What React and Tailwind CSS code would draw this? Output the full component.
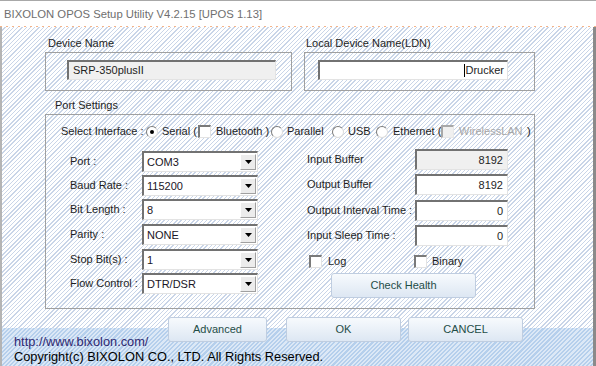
import React from "react";

const hatch =
  "bg-[repeating-linear-gradient(135deg,#ffffff_0px,#ffffff_2px,#c9d5e8_2px,#c9d5e8_3px)]";
const band =
  "bg-[repeating-linear-gradient(135deg,#dce8f6_0px,#dce8f6_1.5px,#b5cfec_1.5px,#b5cfec_3px)]";
const sunken =
  "border-t-2 border-l-2 border-r border-b border-t-[#727272] border-l-[#727272] border-r-[#e3e3e3] border-b-[#e3e3e3]";
const btn =
  "rounded-[3px] border border-[#bfcde0] bg-[linear-gradient(#f7fafd,#dde7f3)] text-[#1f4d47] flex items-center justify-center";

function Combo({ value, cls = "" }) {
  return (
    <div className={`w-[116px] h-[21px] bg-white flex items-center ${sunken} ${cls}`}>
      <span className="flex-1 pl-[3px] text-[#1a1525]">{value}</span>
      <div className="w-[16px] h-[16px] mr-[1px] bg-[#ececec] border border-t-white border-l-white border-r-[#a0a0a0] border-b-[#a0a0a0] flex items-center justify-center">
        <svg width="7" height="4" viewBox="0 0 7 4">
          <path d="M0 0h7L3.5 4z" fill="#000" />
        </svg>
      </div>
    </div>
  );
}

function Radio({ checked }) {
  return (
    <div className="w-[12px] h-[12px] rounded-full bg-white border border-t-[#7a7a7a] border-l-[#7a7a7a] border-r-[#dcdcdc] border-b-[#dcdcdc] flex items-center justify-center shrink-0">
      {checked && <div className="w-[4px] h-[4px] rounded-full bg-black" />}
    </div>
  );
}

function Check({ disabled }) {
  return (
    <div
      className={
        disabled
          ? "w-[13px] h-[13px] shrink-0 bg-[#f0f0f0] border-t-2 border-l-2 border-r border-b border-t-[#a8a8a8] border-l-[#a8a8a8] border-r-[#e8e8e8] border-b-[#e8e8e8]"
          : "w-[13px] h-[13px] shrink-0 bg-white border-t-2 border-l-2 border-r border-b border-t-[#7a7a7a] border-l-[#7a7a7a] border-r-[#e3e3e3] border-b-[#e3e3e3]"
      }
    />
  );
}

function NumInput({ value, gray, cls = "" }) {
  return (
    <div
      className={`w-[93px] h-[21px] flex items-center justify-end pr-[4px] ${sunken} ${
        gray ? "bg-[#f0f0f0]" : "bg-white"
      } ${cls}`}
    >
      {value}
    </div>
  );
}

export default function App() {
  const leftRows = [
    ["Port :", "COM3", ""],
    ["Baud Rate :", "115200", "mt-[3px]"],
    ["Bit Length :", "8", "mt-[3px]"],
    ["Parity :", "NONE", "mt-[4px]"],
    ["Stop Bit(s) :", "1", "mt-[4px]"],
    ["Flow Control :", "DTR/DSR", "mt-[3px]"],
  ];
  return (
    <div className="w-[596px] h-[366px] bg-white flex flex-col overflow-hidden font-['Liberation_Sans',Arial,sans-serif] text-[11px] leading-[13px] text-[#1e1e1e]">
      <div className="h-[26px] shrink-0 flex items-center pl-[4px] border-t border-[#a8a8a8] text-[#6f6f6f]">
        <span className="text-[11.3px] leading-[14px]">
          BIXOLON OPOS Setup Utility V4.2.15 [UPOS 1.13]
        </span>
      </div>
      <div className="h-px shrink-0 bg-[repeating-linear-gradient(90deg,#f5b48a_0px,#f5b48a_2px,transparent_2px,transparent_6px)]" />
      <div className={`flex-1 flex flex-col border-l-2 border-l-[#b4b4b4] border-r-[3px] border-r-[#8a8a8a] ${hatch}`}>
        {/* top groups */}
        <div className="pt-[10px] pl-[43px] flex gap-[12px]">
          <div className="w-[247px]">
            <div className="pl-[3px] h-[13px]">Device Name</div>
            <div className="mt-[2px] h-[39px] border border-[#a0a0a0] pl-[21px] pt-[7px]">
              <div className={`w-[209px] h-[20px] bg-[#f0f0f0] flex items-center pl-[4px] ${sunken}`}>
                SRP-350plusII
              </div>
            </div>
          </div>
          <div className="w-[231px]">
            <div className="pl-[2px] h-[13px]">Local Device Name(LDN)</div>
            <div className="mt-[2px] h-[39px] border border-[#a0a0a0] pl-[13px] pt-[7px]">
              <div className={`w-[190px] h-[20px] bg-white flex items-center justify-end pr-[3px] ${sunken}`}>
                <span className="w-px h-[13px] bg-black" />
                <span>Drucker</span>
              </div>
            </div>
          </div>
        </div>

        {/* port settings */}
        <div className="mt-[8px] pl-[43px]">
          <div className="pl-[10px] h-[13px]">Port Settings</div>
          <div className="mt-[2px] w-[490px] h-[195px] border border-[#a0a0a0]">
            <div className="pt-[10px] pl-[15px] h-[23px] flex items-center whitespace-pre">
              <span className="w-[85px]">Select Interface :</span>
              <Radio checked />
              <span className="ml-[4px] w-[36px]">Serial (</span>
              <Check />
              <span className="ml-[5px] w-[55px]">Bluetooth )</span>
              <Radio />
              <span className="ml-[4px] w-[45px]">Parallel</span>
              <Radio />
              <span className="ml-[4px] w-[28px]">USB</span>
              <Radio />
              <span className="ml-[5px] w-[48px]">Ethernet (</span>
              <Check disabled />
              <span className="ml-[5px] w-[68px] text-[#a6a6a6]">WirelessLAN</span>
              <span>)</span>
            </div>
            <div className="pl-[24px] flex items-start">
              <div className="mt-[13px] w-[188px] flex flex-col">
                {leftRows.map(([label, value, m]) => (
                  <div key={label} className={`flex items-center h-[21px] ${m}`}>
                    <span className="w-[72px]">{label}</span>
                    <Combo value={value} />
                  </div>
                ))}
              </div>
              <div className="ml-[49px] mt-[11px] flex flex-col">
                <div className="flex items-center">
                  <span className="w-[108px]">Input Buffer</span>
                  <NumInput value="8192" gray />
                </div>
                <div className="flex items-center mt-[4px]">
                  <span className="w-[108px]">Output Buffer</span>
                  <NumInput value="8192" />
                </div>
                <div className="flex items-center mt-[5px]">
                  <span className="w-[108px]">Output Interval Time :</span>
                  <NumInput value="0" />
                </div>
                <div className="flex items-center mt-[4px]">
                  <span className="w-[108px]">Input Sleep Time :</span>
                  <NumInput value="0" />
                </div>
                <div className="flex items-center mt-[9px]">
                  <div className="w-[107px] flex items-center pl-[2px]">
                    <Check />
                    <span className="ml-[6px]">Log</span>
                  </div>
                  <Check />
                  <span className="ml-[5px]">Binary</span>
                </div>
                <div className={`mt-[5px] ml-[24px] w-[145px] h-[25px] ${btn}`}>Check Health</div>
              </div>
            </div>
          </div>
        </div>

        {/* footer band */}
        <div className={`mt-[19px] flex-1 ${band}`}>
          <div className="-mt-[11px] h-[25px] flex pl-[166px]">
            <div className={`w-[99px] h-[25px] ${btn}`}>Advanced</div>
            <div className={`ml-[19px] w-[115px] h-[25px] ${btn}`}>OK</div>
            <div className={`ml-[7px] w-[115px] h-[25px] ${btn}`}>CANCEL</div>
          </div>
          <div className="-mt-[8px] pl-[12px] text-[12.8px] leading-[15px] text-black">
            <div className="text-[#2f2870]">http://www.bixolon.com/</div>
            <div>Copyright(c) BIXOLON CO., LTD. All Rights Reserved.</div>
          </div>
        </div>
      </div>
    </div>
  );
}
